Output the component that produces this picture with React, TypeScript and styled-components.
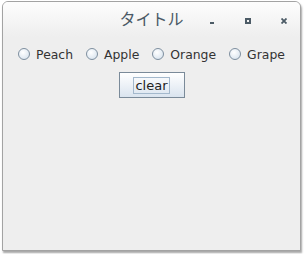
import React, { useState } from 'react'
import styled, { createGlobalStyle } from 'styled-components'

const GlobalStyle = createGlobalStyle`
  html, body {
    margin: 0;
    padding: 0;
    background: #ffffff;
  }
  body {
    font-family: 'DejaVu Sans', 'Noto Sans CJK JP', sans-serif;
  }
`

const fruits = ['Peach', 'Apple', 'Orange', 'Grape']

export default function App() {
  const [selected, setSelected] = useState<string | null>(null)

  return (
    <>
      <GlobalStyle />
      <Page>
        <Window>
          <TitleBar>
            <span />
            <Title>タイトル</Title>
            <Controls>
              <CtrlButton aria-label="minimize">
                <MinGlyph />
              </CtrlButton>
              <CtrlButton aria-label="maximize">
                <MaxGlyph />
              </CtrlButton>
              <CtrlButton aria-label="close">
                <svg width="6" height="6" viewBox="0 0 6 6">
                  <path d="M0.5 0.5 L5.5 5.5 M5.5 0.5 L0.5 5.5" stroke="#4c5b66" strokeWidth="1.8" />
                </svg>
              </CtrlButton>
            </Controls>
          </TitleBar>
          <Content>
            <RadioRow>
              {fruits.map((f) => (
                <RadioLabel key={f} onClick={() => setSelected(f)}>
                  <RadioCircle $checked={selected === f} />
                  {f}
                </RadioLabel>
              ))}
            </RadioRow>
            <ClearButton onClick={() => setSelected(null)}>
              <FocusBox>clear</FocusBox>
            </ClearButton>
          </Content>
        </Window>
      </Page>
    </>
  )
}

const Page = styled.div`
  width: 304px;
  height: 254px;
  padding: 1px 0 0 2px;
  box-sizing: border-box;
`

const Window = styled.div`
  width: 299px;
  height: 250px;
  box-sizing: border-box;
  border: 1px solid #a3a3a3;
  border-radius: 6px 6px 0 0;
  background: #eeeeee;
  box-shadow: 1px 2px 2px rgba(0, 0, 0, 0.35);
  display: flex;
  flex-direction: column;
  overflow: hidden;
`

const TitleBar = styled.div`
  height: 35px;
  flex: none;
  display: grid;
  grid-template-columns: 1fr auto 1fr;
  align-items: center;
  background: linear-gradient(#fdfdfd, #eeeeee);
`

const Title = styled.div`
  font-family: 'Noto Sans CJK JP', sans-serif;
  font-size: 16px;
  color: #4b5a66;
  margin-top: -3px;
`

const Controls = styled.div`
  display: flex;
  justify-content: flex-end;
  align-items: center;
  gap: 24px;
  padding-right: 10px;
  padding-top: 3px;
`

const CtrlButton = styled.div`
  width: 12px;
  height: 12px;
  display: flex;
  align-items: center;
  justify-content: center;
`

const MinGlyph = styled.div`
  width: 4px;
  height: 2px;
  margin-top: 4px;
  background: #4c5b66;
`

const MaxGlyph = styled.div`
  width: 6px;
  height: 6px;
  box-sizing: border-box;
  border: 2px solid #4c5b66;
`

const Content = styled.div`
  display: flex;
  flex-direction: column;
  align-items: center;
  padding-top: 9px;
`

const RadioRow = styled.div`
  display: flex;
  justify-content: center;
  gap: 13px;
  height: 16px;
  align-items: center;
`

const RadioLabel = styled.label`
  display: flex;
  align-items: center;
  gap: 6px;
  font-size: 12.4px;
  color: #333333;
  cursor: pointer;
`

const RadioCircle = styled.span<{ $checked: boolean }>`
  width: 12px;
  height: 12px;
  box-sizing: border-box;
  border-radius: 50%;
  border: 1px solid #7e8f9f;
  background: radial-gradient(circle at 40% 35%, #ffffff 0%, #dfe8f1 70%, #c9d6e3 100%);
  position: relative;

  &::after {
    content: '';
    display: ${({ $checked }) => ($checked ? 'block' : 'none')};
    position: absolute;
    left: 3px;
    top: 3px;
    width: 4px;
    height: 4px;
    border-radius: 50%;
    background: #333333;
  }
`

const ClearButton = styled.button`
  margin-top: 10px;
  width: 66px;
  height: 26px;
  box-sizing: border-box;
  border: 1px solid #7a8a99;
  border-radius: 0;
  background: linear-gradient(#ffffff, #dae4ef);
  padding: 0;
  display: flex;
  align-items: center;
  justify-content: center;
  cursor: pointer;
`

const FocusBox = styled.span`
  border: 1px solid #a3b8cc;
  padding: 0 1px;
  height: 17px;
  line-height: 16px;
  box-sizing: border-box;
  font-family: 'DejaVu Sans', sans-serif;
  font-size: 13px;
  color: #222222;
`
